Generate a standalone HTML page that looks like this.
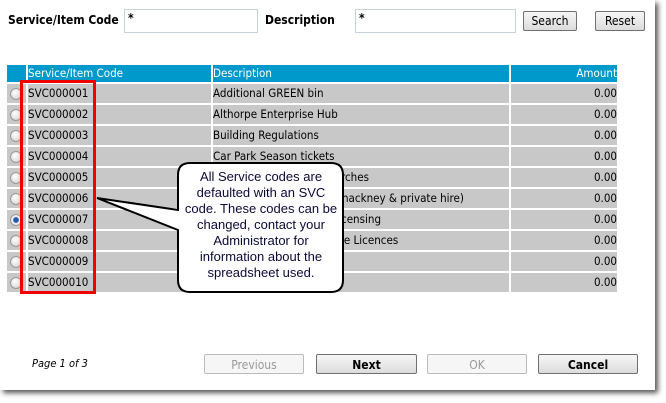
<!DOCTYPE html>
<html><head><style>
body{margin:0;width:666px;height:403px;background:#fff;position:relative;overflow:hidden;font-family:"DejaVu Sans Condensed","DejaVu Sans","Liberation Sans",sans-serif;font-size:11.5px;color:#000}
.panel{position:absolute;left:0;top:0;width:655px;height:390px;background:#fff;box-shadow:3px 3px 5px #555}
.a{position:absolute}
.lbl{font-weight:bold;font-size:12px}
.inp{position:absolute;border:1px solid #c8d2dc;background:#fff;height:21px;font-size:12px;font-weight:bold;padding-left:3px;box-sizing:border-box;line-height:17px}
.btn{position:absolute;border:1px solid #707070;border-radius:2px;background:linear-gradient(#f6f6f6,#dcdcdc);text-align:center;font-size:12px;box-sizing:border-box}
.row{position:absolute;left:7px;width:610px;height:19px}
.c{position:absolute;top:0;height:19px;background:#c8c8c8;line-height:19px;overflow:hidden;white-space:nowrap}
.rad{position:absolute;left:3px;top:4px;width:10px;height:10px;border-radius:50%;border:1px solid #999;background:radial-gradient(circle at 40% 35%,#fff,#ccc)}
</style></head><body>
<div class="panel"></div>
<div class="a lbl" style="left:8px;top:13px">Service/Item Code</div>
<div class="inp" style="left:124px;top:9px;width:134px;height:24px">*</div>
<div class="a lbl" style="left:265px;top:13px">Description</div>
<div class="inp" style="left:355px;top:9px;width:161px;height:24px">*</div>
<div class="btn" style="left:523px;top:11px;width:54px;height:20px;line-height:18px">Search</div>
<div class="btn" style="left:595px;top:11px;width:50px;height:20px;line-height:18px">Reset</div>

<div class="row" style="top:65px;height:17px">
<div class="c" style="left:0;width:19px;height:17px;background:#0099cc"></div>
<div class="c" style="left:21px;width:183px;height:17px;background:#0099cc;color:#fff;line-height:17px">Service/Item Code</div>
<div class="c" style="left:206px;width:296px;height:17px;background:#0099cc;color:#fff;line-height:17px">Description</div>
<div class="c" style="left:504px;width:106px;height:17px;background:#0099cc;color:#fff;line-height:17px;text-align:right">Amount</div>
</div>
<div id="rows"></div>

<div class="a" style="left:20px;top:80px;width:70px;height:208px;border:3px solid #e00"></div>

<svg class="a" style="left:0;top:0" width="666" height="403">
<path d="M190 163 H331 Q343 163 343 175 V280 Q343 292 331 292 H190 Q178 292 178 280 V230 L97 198 L178 210 V175 Q178 163 190 163 Z" fill="#fff" stroke="#000" stroke-width="2"/>
</svg>
<div class="a" style="left:180px;top:169px;width:162px;text-align:center;font-family:'Liberation Sans',sans-serif;font-size:13px;line-height:16px;color:#0a0a3a">All Service codes are<br>defaulted with an SVC<br>code. These codes can be<br>changed, contact your<br>Administrator for<br>information about the<br>spreadsheet used.</div>

<div class="a" style="left:32px;top:357px;font-style:italic;font-size:11px">Page 1 of 3</div>
<div class="btn" style="left:204px;top:354px;width:100px;height:20px;line-height:20px;color:#999;border-color:#bbb;background:#f6f6f6">Previous</div>
<div class="btn" style="left:316px;top:354px;width:101px;height:20px;line-height:20px;font-weight:bold">Next</div>
<div class="btn" style="left:427px;top:354px;width:100px;height:20px;line-height:20px;color:#999;border-color:#bbb;background:#f6f6f6">OK</div>
<div class="btn" style="left:538px;top:354px;width:100px;height:20px;line-height:20px;font-weight:bold">Cancel</div>

<script>
var d=["Additional GREEN bin","Althorpe Enterprise Hub","Building Regulations","Car Park Season tickets","rches","hackney &amp; private hire)","censing","le Licences","",""];
var h="";
for(var i=0;i<10;i++){var t=84+i*21;var n=("0"+(i+1)).slice(-2);
var desc=(i>=4&&i<=7)?'<span style="position:absolute;left:'+(i==5?129:128)+'px">'+d[i]+'</span>':d[i];
h+='<div class="row" style="top:'+t+'px"><div class="c" style="left:0;width:19px"><div class="rad"'+(i==6?' style="background:radial-gradient(circle,#1a5fb4 35%,#eee 45%)"':'')+'></div></div><div class="c" style="left:21px;width:183px">SVC0000'+n+'</div><div class="c" style="left:206px;width:296px">'+desc+'</div><div class="c" style="left:504px;width:106px;text-align:right">0.00</div></div>';}
document.getElementById("rows").innerHTML=h;
</script>
</body></html>
